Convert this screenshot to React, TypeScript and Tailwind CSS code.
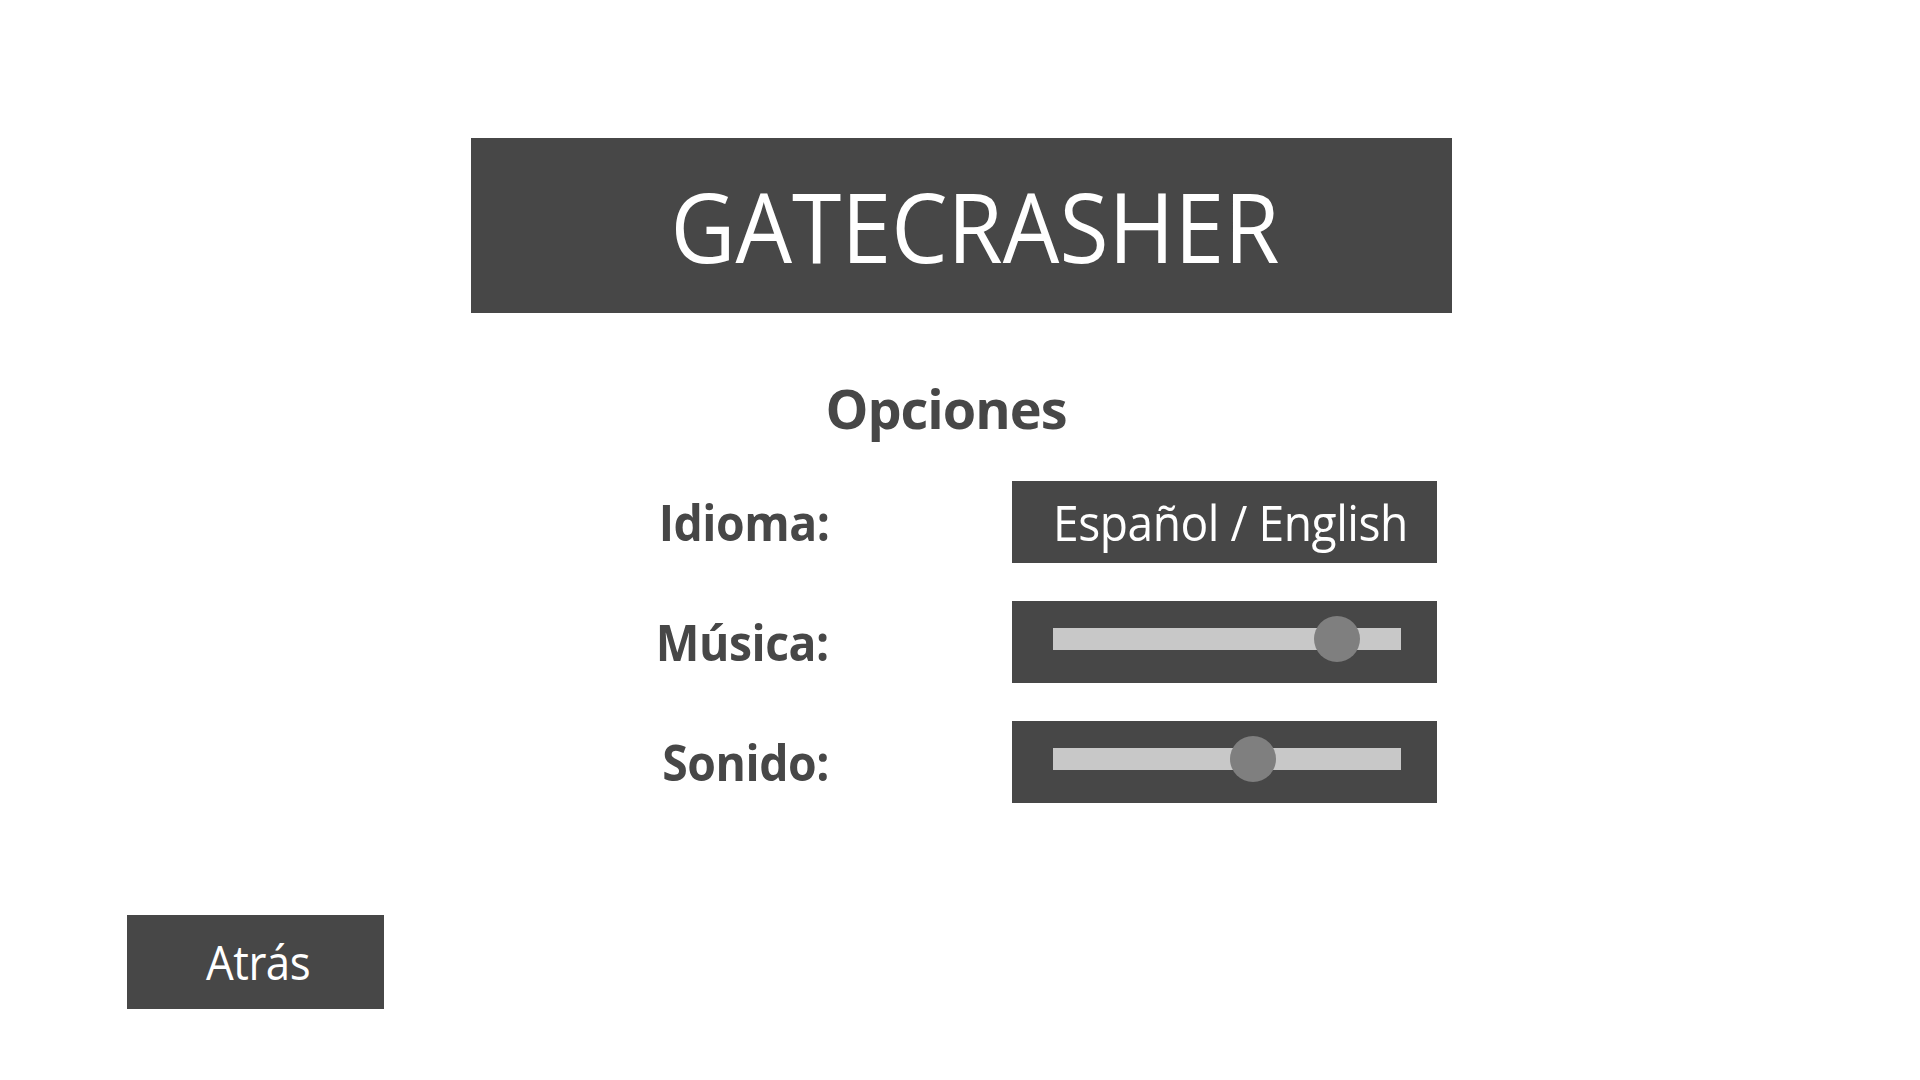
import React from 'react';

const font = { fontFamily: '"Open Sans", "Liberation Sans", sans-serif' };

const Slider = ({ value }: { value: number }) => (
  <div className="w-[425px] h-[82px] bg-[#474747] pl-[41px] pr-[36px] pt-[27px]">
    <div className="relative h-[22px] bg-[#c8c8c8]">
      <div
        className="absolute top-1/2 w-[46px] h-[46px] -ml-[23px] -translate-y-1/2 rounded-full bg-[#7f7f7f]"
        style={{ left: `${value}%` }}
      />
    </div>
  </div>
);

const Label = ({ children }: { children: React.ReactNode }) => (
  <div className="text-right">
    <span className="inline-block origin-right scale-x-[0.926] text-[50px] font-bold leading-none tracking-[-0.5px] whitespace-nowrap">
      {children}
    </span>
  </div>
);

export default function App() {
  return (
    <div className="w-[1920px] h-[1080px] bg-white flex flex-col text-[#474747]" style={font}>
      <div className="pt-[138px] pl-[3px] flex justify-center">
        <div className="w-[981px] h-[175px] bg-[#474747] flex items-center justify-center pl-[26px]">
          <span className="inline-block scale-x-[0.923] text-white text-[97px] leading-none whitespace-nowrap">GATECRASHER</span>
        </div>
      </div>

      <div className="mt-[68px] flex justify-center pr-[28px]">
        <h2 className="text-[54px] leading-none font-bold tracking-[-1px] [font-stretch:90%]">Opciones</h2>
      </div>

      <div className="mt-[46px] grid grid-cols-[369px_425px] gap-x-[183px] gap-y-[38px] ml-[460px] items-center">
        <Label>Idioma:</Label>
        <div className="w-[425px] h-[82px] bg-[#474747] flex items-center pl-[41px]">
          <span className="inline-block origin-left scale-x-[0.923] text-white text-[50px] leading-none whitespace-nowrap tracking-[-0.5px]">Español / English</span>
        </div>

        <Label>Música:</Label>
        <Slider value={81.5} />

        <Label>Sonido:</Label>
        <Slider value={57.5} />
      </div>

      <div className="mt-auto mb-[71px] ml-[127px]">
        <button className="w-[257px] h-[94px] bg-[#474747] flex items-center justify-center pl-[5px]">
          <span className="inline-block scale-x-[0.913] text-white text-[48px] leading-none tracking-[-0.5px]">Atrás</span>
        </button>
      </div>
    </div>
  );
}
